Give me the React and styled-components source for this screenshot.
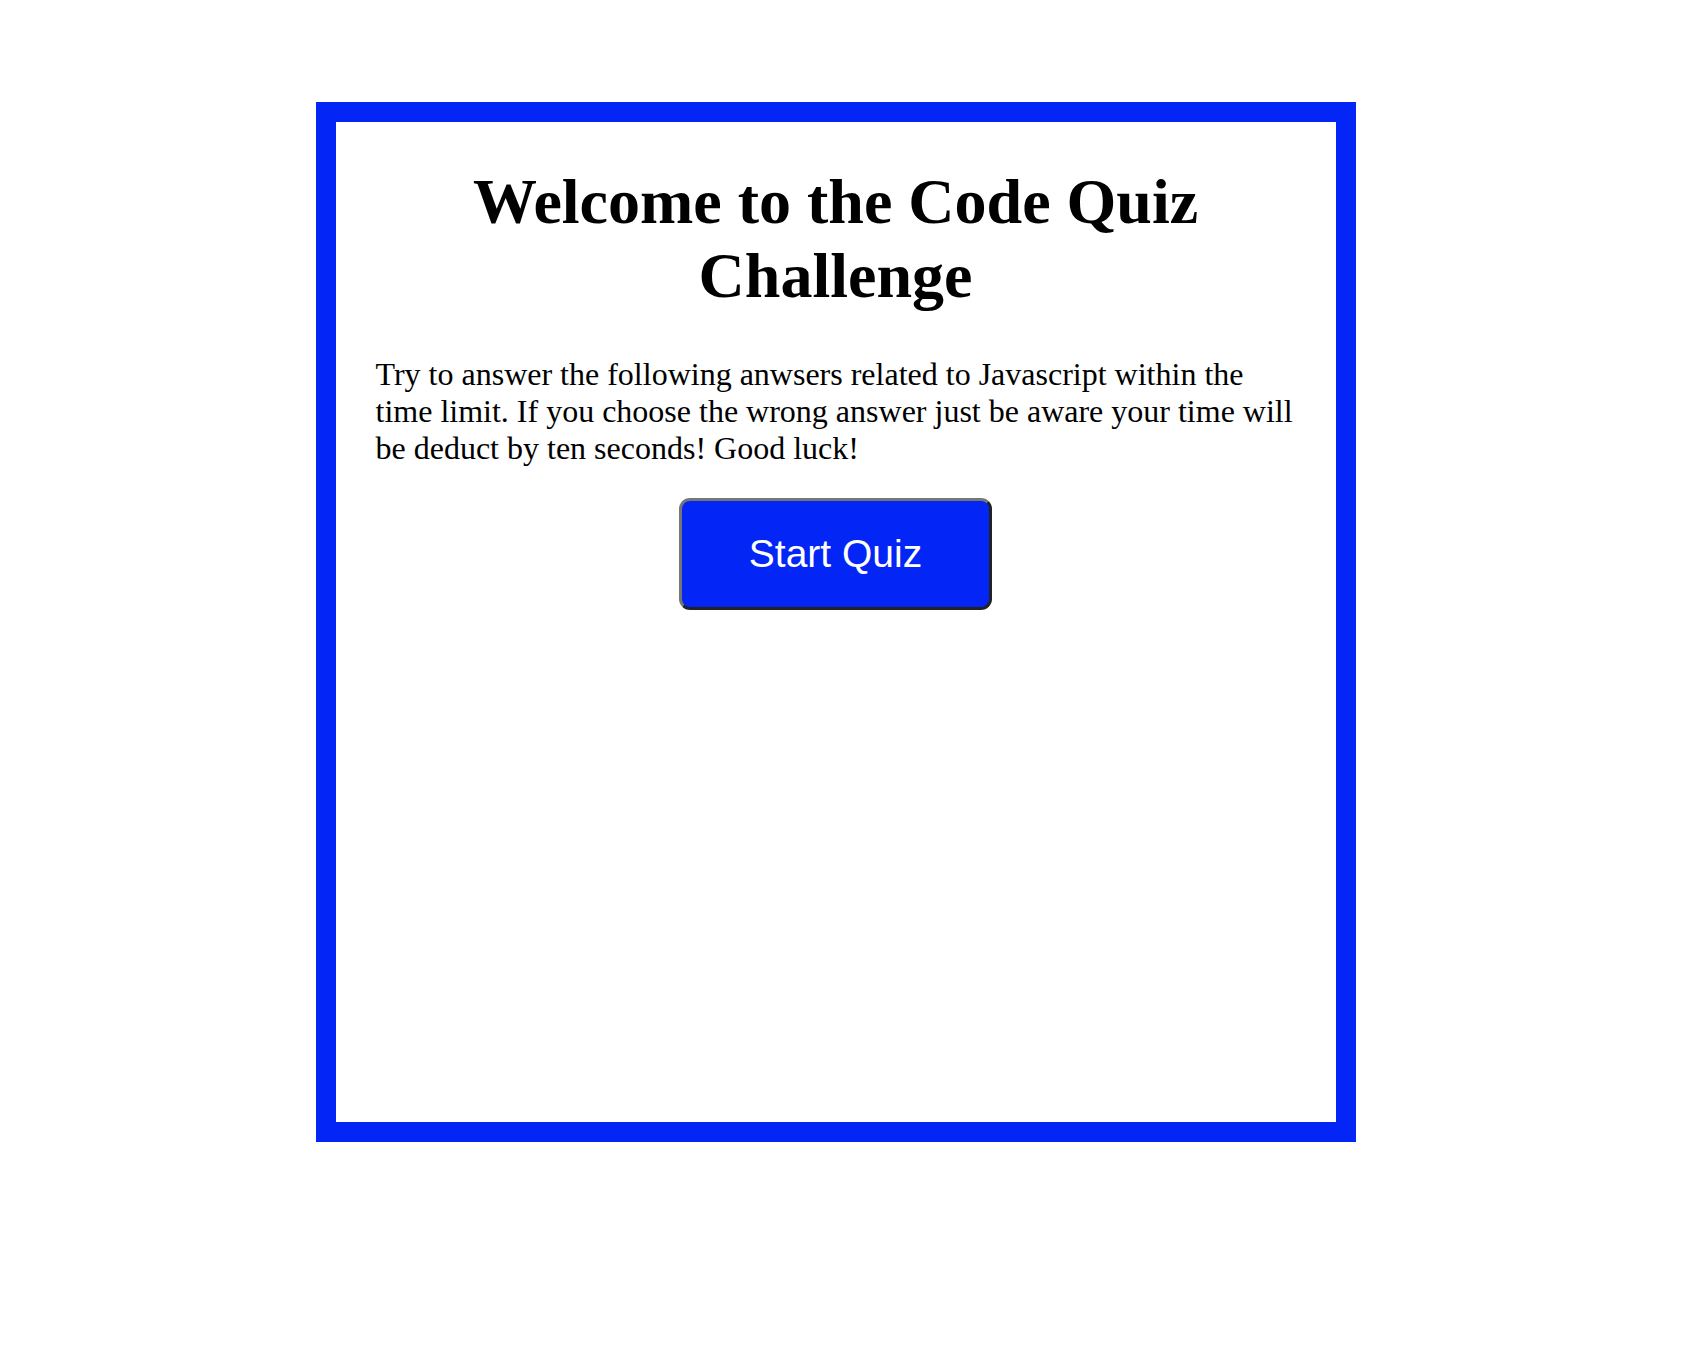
import React from "react";
import styled, { createGlobalStyle } from "styled-components";

const GlobalStyle = createGlobalStyle`
  html, body {
    margin: 0;
    padding: 0;
    background: #fff;
    font-family: "Liberation Serif", "Times New Roman", serif;
    color: #000;
  }
`;

export default function App() {
  return (
    <>
      <GlobalStyle />
      <Page>
        <Card>
          <Title>Welcome to the Code Quiz Challenge</Title>
          <Intro>
            Try to answer the following anwsers related to Javascript within
            the time limit. If you choose the wrong answer just be aware your
            time will be deduct by ten seconds! Good luck!
          </Intro>
          <Actions>
            <StartBtn>Start Quiz</StartBtn>
          </Actions>
        </Card>
      </Page>
    </>
  );
}

const Page = styled.main`
  padding: 102px 15px 200px 0;
`;
const Card = styled.section`
  box-sizing: content-box;
  width: 1000px;
  height: 1000px;
  margin: 0 auto;
  border: 20px solid #0326f7;
  background: #fff;
`;
const Title = styled.h1`
  margin: 43px 40px;
  font-size: 64px;
  font-weight: 700;
  text-align: center;
`;
const Intro = styled.p`
  margin: 0 40px 31px;
  font-size: 32px;
`;
const Actions = styled.div`
  display: flex;
  justify-content: center;
`;
const StartBtn = styled.button`
  width: 313px;
  height: 112px;
  padding: 0;
  border: 3px solid;
  border-color: #767676 #222 #222 #767676;
  border-radius: 11px;
  background: #0326f7;
  color: #fff;
  font-family: "Liberation Sans", Arial, sans-serif;
  font-size: 39px;
  cursor: pointer;
`;
